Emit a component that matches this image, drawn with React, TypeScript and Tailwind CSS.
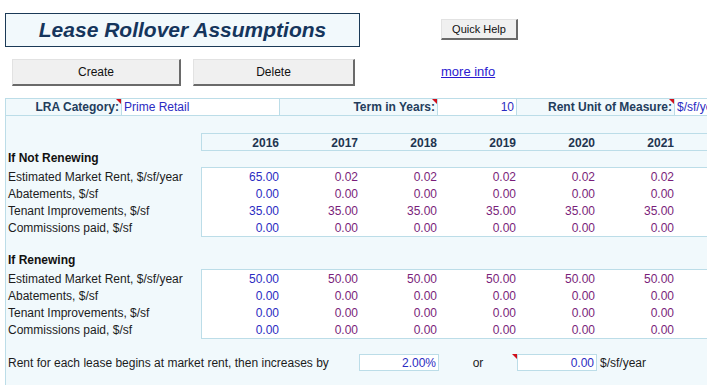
import { clsx } from 'clsx';

const FONT = { fontFamily: '"Liberation Sans", Arial, sans-serif' };
const YEARS = ['2016', '2017', '2018', '2019', '2020', '2021'];

type Row = { label: string; first: string; rest: string };

const NOT_RENEWING: Row[] = [
  { label: 'Estimated Market Rent, $/sf/year', first: '65.00', rest: '0.02' },
  { label: 'Abatements, $/sf', first: '0.00', rest: '0.00' },
  { label: 'Tenant Improvements, $/sf', first: '35.00', rest: '35.00' },
  { label: 'Commissions paid, $/sf', first: '0.00', rest: '0.00' },
];

const RENEWING: Row[] = [
  { label: 'Estimated Market Rent, $/sf/year', first: '50.00', rest: '50.00' },
  { label: 'Abatements, $/sf', first: '0.00', rest: '0.00' },
  { label: 'Tenant Improvements, $/sf', first: '0.00', rest: '0.00' },
  { label: 'Commissions paid, $/sf', first: '0.00', rest: '0.00' },
];

// little red comment marker in the corner of a cell
function Marker() {
  return (
    <span className="absolute top-0 right-0 w-0 h-0 border-t-[5px] border-t-[#d0101c] border-l-[5px] border-l-transparent" />
  );
}

function Block({ rows }: { rows: Row[] }) {
  return (
    <div className="flex">
      <div className="w-[195px] shrink-0 pt-[1px]">
        {rows.map((r) => (
          <div key={r.label} className="h-[17px] flex items-center pl-[2px] text-[12px] text-[#1c1c1c]">
            {r.label}
          </div>
        ))}
      </div>
      <div className="flex-1 bg-white border border-r-0 border-[#bcdde8]">
        {rows.map((r) => (
          <div key={r.label} className="flex h-[17px] items-center text-[12px]">
            {YEARS.map((y, i) => (
              <div
                key={y}
                className={clsx(
                  'w-[79px] shrink-0 text-right pr-[2px]',
                  i === 0 ? 'text-[#2b2bc2]' : 'text-[#7a1e7a]'
                )}
              >
                {i === 0 ? r.first : r.rest}
              </div>
            ))}
          </div>
        ))}
      </div>
    </div>
  );
}

export default function App() {
  return (
    <div className="w-[707px] h-[385px] overflow-hidden bg-white" style={FONT}>
      {/* header area */}
      <div className="flex h-[98px]">
        <div className="w-[441px] shrink-0">
          <div className="ml-[5px] mt-[13px] w-[355px] h-[34px] border border-[#1b3a57] bg-[#f2f9fc] flex items-center justify-center">
            <span className="text-[21px] font-bold italic text-[#15355c]">
              Lease Rollover Assumptions
            </span>
          </div>
          <div className="flex mt-[12px] ml-[12px] gap-[12px]">
            <button className="w-[169px] h-[27px] bg-[#f0f0f0] border border-[#e2e2e2] border-r-2 border-b-2 border-r-[#6a6a6a] border-b-[#6a6a6a] text-[12px] text-[#111]">
              Create
            </button>
            <button className="w-[162px] h-[27px] bg-[#f0f0f0] border border-[#e2e2e2] border-r-2 border-b-2 border-r-[#6a6a6a] border-b-[#6a6a6a] text-[12px] text-[#111]">
              Delete
            </button>
          </div>
        </div>
        <div className="flex flex-col">
          <button className="mt-[19px] w-[77px] h-[21px] bg-[#f0f0f0] border border-[#e2e2e2] border-r-2 border-b-2 border-r-[#6a6a6a] border-b-[#6a6a6a] text-[11px] text-[#111]">
            Quick Help
          </button>
          <a href="#" className="mt-[25px] text-[13px] text-[#2a1ad0] underline leading-none">
            more info
          </a>
        </div>
      </div>

      {/* sheet */}
      <div className="ml-[5px] h-[287px] bg-[#f1f9fc] border-l border-t border-[#bcdde8]">
        <div className="flex h-[17px] border-b border-[#bcdde8] text-[12px]">
          <div className="relative w-[116px] shrink-0 flex items-center justify-end pr-[2px] font-bold text-[#233d5c] border-r border-[#bcdde8]">
            LRA Category:
            <Marker />
          </div>
          <div className="w-[158px] shrink-0 flex items-center pl-[2px] bg-white text-[#2b2bc2] border-r border-[#bcdde8]">
            Prime Retail
          </div>
          <div className="relative w-[158px] shrink-0 flex items-center justify-end pr-[2px] font-bold text-[#233d5c] border-r border-[#bcdde8]">
            Term in Years:
            <Marker />
          </div>
          <div className="w-[79px] shrink-0 flex items-center justify-end pr-[2px] bg-white text-[#2b2bc2] border-r border-[#bcdde8]">
            10
          </div>
          <div className="relative w-[158px] shrink-0 flex items-center justify-end pr-[2px] font-bold text-[#233d5c] border-r border-[#bcdde8]">
            Rent Unit of Measure:
            <Marker />
          </div>
          <div className="flex-1 flex items-center pl-[2px] bg-white text-[#2b2bc2] whitespace-nowrap overflow-hidden">
            $/sf/year
          </div>
        </div>

        <div className="h-[17px]" />

        <div className="flex h-[18px]">
          <div className="w-[195px] shrink-0" />
          <div className="flex-1 flex items-center pt-[1px] border border-r-0 border-[#bcdde8] text-[12px] font-bold text-[#1f3550]">
            {YEARS.map((y) => (
              <div key={y} className="w-[79px] shrink-0 text-right pr-[2px]">
                {y}
              </div>
            ))}
          </div>
        </div>

        <div className="h-[16px] flex items-end pl-[2px] text-[12px] font-bold text-[#111]">
          If Not Renewing
        </div>
        <Block rows={NOT_RENEWING} />

        <div className="h-[16px]" />
        <div className="h-[16px] flex items-end pl-[2px] text-[12px] font-bold text-[#111]">
          If Renewing
        </div>
        <Block rows={RENEWING} />

        <div className="h-[15px]" />
        <div className="flex h-[17px] items-stretch text-[12px]">
          <div className="w-[353px] shrink-0 flex items-center pl-[2px] text-[#1c1c1c] whitespace-nowrap">
            Rent for each lease begins at market rent, then increases by
          </div>
          <div className="w-[80px] shrink-0 flex items-center justify-end pr-[2px] bg-white border border-[#bcdde8] text-[#2b2bc2]">
            2.00%
          </div>
          <div className="relative w-[78px] shrink-0 flex items-center justify-center text-[#1c1c1c]">
            or
            <Marker />
          </div>
          <div className="w-[80px] shrink-0 flex items-center justify-end pr-[2px] bg-white border border-[#bcdde8] text-[#2b2bc2]">
            0.00
          </div>
          <div className="flex items-center pl-[3px] text-[#1c1c1c]">$/sf/year</div>
        </div>
      </div>
    </div>
  );
}
